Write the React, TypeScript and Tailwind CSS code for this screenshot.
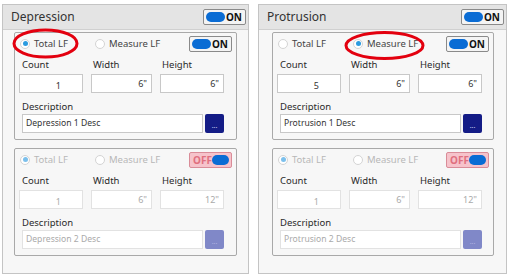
import React from "react";

type CardProps = {
  enabled: boolean;
  selected: "total" | "measure";
  count: string;
  width: string;
  height: string;
  desc: string;
};

function Radio({ on, label, dim }: { on: boolean; label: string; dim: boolean }) {
  return (
    <div className="flex items-center gap-[4px]">
      <span className="w-[10px] h-[10px] rounded-full border border-[#d4d4d4] bg-white flex items-center justify-center">
        {on && <span className={`w-[5px] h-[5px] rounded-full ${dim ? "bg-[#7cc0ec]" : "bg-[#2b9be0]"}`} />}
      </span>
      <span className={`text-[9.5px] leading-none ${dim ? "text-[#b8b8b8]" : "text-[#444]"}`}>{label}</span>
    </div>
  );
}

function Toggle({ on }: { on: boolean }) {
  if (on) {
    return (
      <div className="w-[43px] h-[16px] border border-[#8a8a8a] bg-[#f4f4f4] rounded-[2px] flex items-center pl-[2px] pr-[3px] justify-between">
        <span className="w-[19px] h-[10px] rounded-full bg-[#0a6cd4]" />
        <span className="text-[10px] font-bold text-[#111] leading-none">ON</span>
      </div>
    );
  }
  return (
    <div className="w-[43px] h-[16px] border border-[#d98c98] bg-[#f6c3cb] rounded-[2px] flex items-center pl-[3px] pr-[2px] justify-between">
      <span className="text-[10px] font-bold text-[#e0707f] leading-none">OFF</span>
      <span className="w-[19px] h-[10px] rounded-full bg-[#0a6cd4]" />
    </div>
  );
}

function Card({ enabled, selected, count, width, height, desc }: CardProps) {
  const dim = !enabled;
  const val = dim ? "text-[#aaaaaa]" : "text-[#333]";
  const inputBorder = dim ? "border-[#e2e2e2]" : "border-[#c8c8c8]";
  return (
    <div className="border border-[#a9a9a9] rounded-[2px] bg-[#f7f7f7] pl-[4px] pr-[4px] pt-[2px] pb-[6px]">
      <div className="flex items-center h-[17px]">
        <div className="pl-[1px] w-[76px]">
          <Radio on={selected === "total"} label="Total LF" dim={dim} />
        </div>
        <Radio on={selected === "measure"} label="Measure LF" dim={dim} />
        <div className="ml-auto">
          <Toggle on={enabled} />
        </div>
      </div>
      <div className="flex mt-[8px] text-[9.5px] text-[#2a2a2a] leading-none">
        <div className="w-[72px] pl-[3px]">Count</div>
        <div className="w-[70px] pl-[2px]">Width</div>
        <div className="pl-[1px]">Height</div>
      </div>
      <div className="flex mt-[4px] gap-[8px]">
        <div className={`w-[64px] h-[19px] bg-white border ${inputBorder} flex items-end justify-end pr-[21px] pb-[2px] text-[9px] leading-none ${val}`}>{count}</div>
        <div className={`w-[61px] h-[19px] bg-white border ${inputBorder} flex items-start justify-end pr-[4px] pt-[4px] text-[9px] leading-none ${val}`}>{width}</div>
        <div className={`w-[64px] h-[19px] bg-white border ${inputBorder} flex items-start justify-end pr-[4px] pt-[4px] text-[9px] leading-none ${val}`}>{height}</div>
      </div>
      <div className="mt-[9px] pl-[3px] text-[9.5px] text-[#2a2a2a] leading-none">Description</div>
      <div className="flex mt-[3px] pl-[3px] gap-[2px]">
        <div className={`w-[181px] h-[19px] bg-white border ${inputBorder} flex items-center pl-[3px] text-[8.6px] leading-none ${val}`}>{desc}</div>
        <div className={`w-[19px] h-[19px] rounded-[2px] flex items-end justify-center pb-[4px] ${dim ? "bg-[#8088c8]" : "bg-[#141c86]"}`}>
          <span className={`text-[7px] leading-none ${dim ? "text-[#b0b4e0]" : "text-[#c8cbf0]"}`}>...</span>
        </div>
      </div>
    </div>
  );
}

function Panel({ title, cards, w, pad }: { title: string; cards: CardProps[]; w: string; pad: string }) {
  return (
    <div className={`${w} border border-[#c4c4c4] bg-[#f7f7f7]`}>
      <div className="h-[25px] bg-[#e4e4e4] flex items-center pl-[8px] pr-[2px] border-b border-[#d0d0d0]">
        <span className="text-[12px] text-[#333] leading-none">{title}</span>
        <div className="ml-auto">
          <Toggle on={true} />
        </div>
      </div>
      <div className={`${pad} pt-[2px] pb-[13px] flex flex-col gap-[8px]`}>
        {cards.map((c, i) => (
          <Card key={i} {...c} />
        ))}
      </div>
    </div>
  );
}

export default function App() {
  return (
    <div
      className="relative w-[510px] h-[274px] bg-white pl-[2px] pt-[4px] flex gap-[9px]"
      style={{ fontFamily: '"Noto Sans", "Open Sans", sans-serif' }}
    >
      <Panel
        title="Depression"
        w="w-[247px]"
        pad="pl-[11px] pr-[11px]"
        cards={[
          { enabled: true, selected: "total", count: "1", width: '6"', height: '6"', desc: "Depression 1 Desc" },
          { enabled: false, selected: "total", count: "1", width: '6"', height: '12"', desc: "Depression 2 Desc" },
        ]}
      />
      <Panel
        title="Protrusion"
        w="w-[249px]"
        pad="pl-[13px] pr-[12px]"
        cards={[
          { enabled: true, selected: "measure", count: "5", width: '6"', height: '6"', desc: "Protrusion 1 Desc" },
          { enabled: false, selected: "total", count: "1", width: '6"', height: '12"', desc: "Protrusion 2 Desc" },
        ]}
      />
      <svg className="absolute left-[12px] top-[28px]" width="67" height="32" viewBox="0 0 67 32">
        <ellipse cx="33.5" cy="15.5" rx="31.5" ry="13.5" fill="none" stroke="#e3000f" strokeWidth="3" />
      </svg>
      <svg className="absolute left-[344px] top-[30px]" width="81" height="31" viewBox="0 0 81 31">
        <ellipse cx="40.5" cy="15.5" rx="38.5" ry="13" fill="none" stroke="#e3000f" strokeWidth="3" />
      </svg>
    </div>
  );
}
